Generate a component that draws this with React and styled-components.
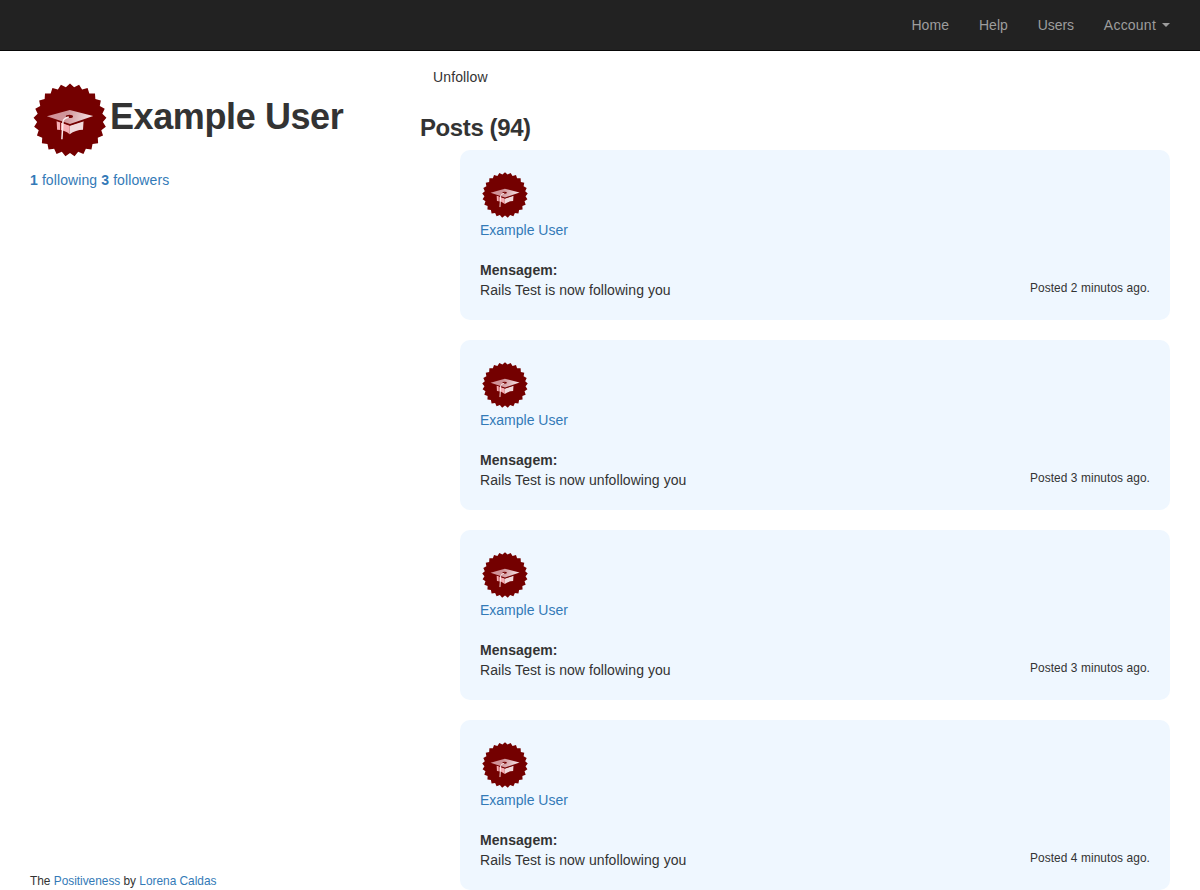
import React from "react";
import styled, { createGlobalStyle } from "styled-components";

const GlobalStyle = createGlobalStyle`
  *, *::before, *::after { box-sizing: border-box; }
  body {
    margin: 0;
    overflow: hidden;
    background: #fff;
    color: #333;
    font-family: "Helvetica Neue", "Liberation Sans", Arial, sans-serif;
    font-size: 14px;
    line-height: 20px;
  }
`;

const Page = styled.div`
  display: flex;
  flex-direction: column;
  height: 890px;
`;

const Navbar = styled.nav`
  display: flex;
  flex: none;
  justify-content: flex-end;
  height: 51px;
  padding: 0 15px;
  background: #222;
  border-bottom: 1px solid #080808;
`;

const NavLink = styled.a`
  display: flex;
  align-items: center;
  padding: 0 15px;
  color: #9d9d9d;
  letter-spacing: ${(p) => p.$track || 0}px;
`;

const Caret = styled.span`
  margin-left: 6px;
  border-top: 4px solid #9d9d9d;
  border-left: 4px solid transparent;
  border-right: 4px solid transparent;
`;

const Content = styled.div`
  display: grid;
  grid-template-columns: 390px 1fr;
  flex: 1;
  padding: 0 30px;
`;

const Sidebar = styled.aside`
  display: flex;
  flex-direction: column;
  padding-top: 29px;
`;

const Profile = styled.div`
  display: flex;
  height: 90px;
`;

const UserName = styled.h1`
  margin: 17px 0 0;
  font-size: 36px;
  font-weight: 700;
  line-height: 40px;
  white-space: nowrap;
  letter-spacing: -0.4px;
`;

const Link = styled.a`
  color: #337ab7;
`;

const Stats = styled.div`
  color: #337ab7;
  letter-spacing: 0.1px;
`;

const Footer = styled.footer`
  margin-top: auto;
  margin-bottom: -1px;
  font-size: 11.9px;
  letter-spacing: -0.02px;
`;

const Main = styled.main`
  display: flex;
  flex-direction: column;
`;

const Unfollow = styled.button`
  align-self: flex-start;
  margin-top: 9px;
  padding: 7px 13px;
  border: 0;
  background: none;
  color: #333;
  font: inherit;
  letter-spacing: 0.13px;
`;

const PostsTitle = styled.h3`
  margin: 21px 0 9px;
  font-size: 24px;
  font-weight: 700;
  line-height: 26px;
  letter-spacing: -0.4px;
`;

const PostList = styled.ol`
  display: flex;
  flex-direction: column;
  gap: 20px;
  margin: 0;
  padding: 0 0 0 40px;
  list-style: none;
`;

const PostCard = styled.li`
  display: flex;
  flex-direction: column;
  height: 170px;
  padding: 20px;
  border-radius: 10px;
  background: #eff7ff;
`;

const PostBody = styled.div`
  display: flex;
  justify-content: space-between;
  margin-top: 20px;
`;

const Message = styled.div`
  letter-spacing: 0.06px;
`;

const Timestamp = styled.span`
  margin-top: 18px;
  font-size: 11.9px;
  letter-spacing: 0.08px;
`;

const BadgeSvg = styled.svg`
  display: block;
  flex: none;
`;

const TEETH = 25;
const sealPoints = Array.from({ length: TEETH * 2 }, (_, i) => {
  const r = i % 2 ? 32.9 : 36.5;
  const a = (i * Math.PI) / TEETH;
  return `${(40 + r * Math.sin(a)).toFixed(2)},${(40 - r * Math.cos(a)).toFixed(2)}`;
}).join(" ");

function Badge({ size }) {
  return (
    <BadgeSvg width={size} height={size} viewBox="0 0 80 80">
      <defs>
        <linearGradient id={`board${size}`} x1="0" y1="0" x2="1" y2="0.1">
          <stop offset="0" stopColor="#d39299" />
          <stop offset="0.45" stopColor="#cf9499" />
          <stop offset="1" stopColor="#f6e2e4" />
        </linearGradient>
      </defs>
      <polygon points={sealPoints} fill="#740000" />
      <path d="M26.6 40.4 39.7 45.6V54.3Q34.5 49.6 27.1 49.7Z" fill="#f6adb3" />
      <path d="M39.7 45.6 53.6 40.8 53 49.7Q45.6 49.8 39.7 54.3Z" fill="#f1dadc" />
      <path d="M25.5 39.9 40 45 54.5 40.2" fill="none" stroke="#740000" strokeWidth="1.6" />
      <path d="M16.9 36.3 39.8 30 63.2 35.9 40 44Z" fill={`url(#board${size})`} />
      <path d="M32.8 40.6 30.5 43V58" fill="none" stroke="#740000" strokeWidth="0.8" />
      <ellipse cx="39.4" cy="36.4" rx="3.6" ry="1.7" fill="#740000" />
      <path d="M38.8 37Q33.7 38.4 33 41.2L31.9 59.3" fill="none" stroke="#fae9eb" strokeWidth="1.5" />
    </BadgeSvg>
  );
}

const posts = [
  { message: "Rails Test is now following you", minutes: 2 },
  { message: "Rails Test is now unfollowing you", minutes: 3 },
  { message: "Rails Test is now following you", minutes: 3 },
  { message: "Rails Test is now unfollowing you", minutes: 4 },
];

export default function App() {
  return (
    <Page>
      <GlobalStyle />
      <Navbar>
        <NavLink $track={0.05}>Home</NavLink>
        <NavLink>Help</NavLink>
        <NavLink $track={-0.1}>Users</NavLink>
        <NavLink $track={0.22}>
          Account
          <Caret />
        </NavLink>
      </Navbar>
      <Content>
        <Sidebar>
          <Profile>
            <Badge size={80} />
            <UserName>Example User</UserName>
          </Profile>
          <Stats>
            <b>1</b> following <b>3</b> followers
          </Stats>
          <Footer>
            The <Link>Positiveness</Link> by <Link>Lorena Caldas</Link>
          </Footer>
        </Sidebar>
        <Main>
          <Unfollow>Unfollow</Unfollow>
          <PostsTitle>Posts (94)</PostsTitle>
          <PostList>
            {posts.map((post, i) => (
              <PostCard key={i}>
                <Badge size={50} />
                <Link>Example User</Link>
                <PostBody>
                  <Message>
                    <b>Mensagem:</b>
                    <div>{post.message}</div>
                  </Message>
                  <Timestamp>Posted {post.minutes} minutos ago.</Timestamp>
                </PostBody>
              </PostCard>
            ))}
          </PostList>
        </Main>
      </Content>
    </Page>
  );
}
